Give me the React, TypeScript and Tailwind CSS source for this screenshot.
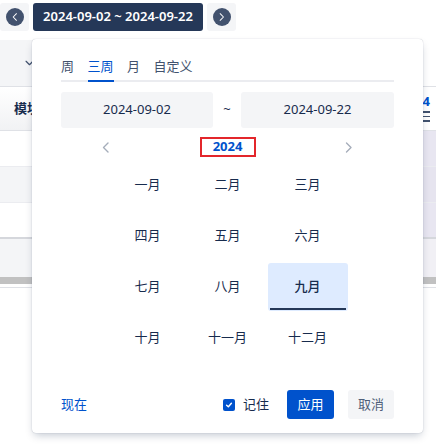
import { useState } from "react";

const months = [
  "一月", "二月", "三月",
  "四月", "五月", "六月",
  "七月", "八月", "九月",
  "十月", "十一月", "十二月",
];

const tabs = ["周", "三周", "月", "自定义"];

function Chevron({ dir, className }: { dir: "left" | "right" | "down"; className?: string }) {
  const points =
    dir === "left" ? "6,1 1.5,5.5 6,10" : dir === "right" ? "1.5,1 6,5.5 1.5,10" : "1,1.5 5,5.5 9,1.5";
  return (
    <svg
      viewBox={dir === "down" ? "0 0 10 7" : "0 0 8 11"}
      className={className}
      fill="none"
      stroke="currentColor"
      strokeWidth={1.4}
      strokeLinecap="round"
      strokeLinejoin="round"
    >
      <polyline points={points} />
    </svg>
  );
}

function RoundArrow({ dir }: { dir: "left" | "right" }) {
  return (
    <button className="flex h-[28px] w-[29px] items-center justify-center rounded-[3px] bg-[#f4f5f7]">
      <span className="flex h-[18px] w-[18px] items-center justify-center rounded-full bg-[#42526e] text-white">
        <Chevron dir={dir} className="h-[8px] w-[6px]" />
      </span>
    </button>
  );
}

export default function App() {
  const [tab, setTab] = useState("三周");
  const [month, setMonth] = useState("九月");
  const [remember, setRemember] = useState(true);

  return (
    <div className="relative h-[445px] w-[436px] overflow-hidden bg-white font-['Noto_Sans','Noto_Sans_CJK_SC',sans-serif] text-[13px] text-[#172b4d]">
      {/* toolbar */}
      <div className="flex items-center gap-[4px] pt-[3px]">
        <RoundArrow dir="left" />
        <div className="flex h-[28px] w-[170px] items-center justify-center rounded-[3px] bg-[#253858] text-[13px] font-semibold text-white">
          2024-09-02 ~ 2024-09-22
        </div>
        <RoundArrow dir="right" />
      </div>

      {/* page behind the popover */}
      <div className="mt-[9px] flex h-[46px] w-[300px] items-center bg-[#f4f5f7] pl-[25px]">
        <Chevron dir="down" className="h-[6px] w-[9px] text-[#42526e]" />
      </div>
      <div className="flex h-[45px] border-y border-[#dfe1e6]">
        <div className="flex flex-1 items-center bg-gradient-to-b from-white to-[#f1f2f4] pl-[14px] font-bold">
          模块
        </div>
        <div className="flex w-[36px] flex-col items-end justify-center gap-[3px] pr-[6px]">
          <span className="text-[13px] font-bold leading-[13px] text-[#0052cc]">24</span>
          <span className="flex w-[8px] flex-col gap-[3px]">
            <span className="h-[1.5px] bg-[#42526e]" />
            <span className="h-[1.5px] bg-[#42526e]" />
            <span className="h-[1.5px] bg-[#42526e]" />
          </span>
        </div>
      </div>
      <div className="flex h-[36px] border-b border-[#ebecf0]">
        <div className="flex-1 bg-white" />
        <div className="w-[36px] bg-[#e8e6f1]" />
      </div>
      <div className="flex h-[36px] border-b border-[#ebecf0]">
        <div className="flex-1 bg-[#f4f5f7]" />
        <div className="w-[36px] bg-[#e6e4ef]" />
      </div>
      <div className="flex h-[36px] border-b-2 border-[#d5d7dc]">
        <div className="flex-1 bg-white" />
        <div className="w-[36px] bg-[#e8e6f1]" />
      </div>
      <div className="flex h-[38px]">
        <div className="flex-1 bg-[#f4f5f7]" />
        <div className="w-[36px] bg-[#f1f0f5]" />
      </div>
      <div className="h-[7px] bg-[#c1c1c1]" />
      <div className="mt-[3px] h-px bg-[#dfe1e6]" />

      {/* popover */}
      <div className="absolute left-[32px] top-[39px] flex h-[394px] w-[391px] flex-col rounded-[4px] bg-white px-[29px] pb-[14px] pt-[17px] shadow-[0_4px_8px_-2px_rgba(9,30,66,0.25),0_0_1px_rgba(9,30,66,0.31)]">
        <div className="flex gap-[13.5px] border-b-2 border-[#ebecf0]">
          {tabs.map((t) => (
            <button
              key={t}
              onClick={() => setTab(t)}
              className={
                "-mb-[2px] border-b-2 pb-[4px] text-[13px] leading-[20px] " +
                (t === tab ? "border-[#0052cc] text-[#0052cc]" : "border-transparent text-[#42526e]")
              }
            >
              {t}
            </button>
          ))}
        </div>

        <div className="mt-[10px] grid grid-cols-[152px_28px_1fr] items-center">
          <div className="flex h-[36px] items-center justify-center rounded-[3px] bg-[#f4f5f7]">2024-09-02</div>
          <div className="text-center">~</div>
          <div className="flex h-[36px] items-center justify-center rounded-[3px] bg-[#f4f5f7]">2024-09-22</div>
        </div>

        <div className="mt-[9px] flex h-[20px] items-center justify-between px-[41px] text-[#a5adba]">
          <Chevron dir="left" className="h-[11px] w-[8px]" />
          <div className="flex h-[20px] w-[56px] items-center justify-center border-2 border-[#e3262b] text-[13px] font-bold text-[#0052cc]">
            2024
          </div>
          <Chevron dir="right" className="h-[11px] w-[8px]" />
        </div>

        <div className="mx-auto mt-[4px] grid w-[240px] grid-cols-3 gap-y-[3px]">
          {months.map((m) => (
            <button
              key={m}
              onClick={() => setMonth(m)}
              className={
                "relative flex h-[48px] items-center justify-center rounded-[3px] " +
                (m === month ? "bg-[#deebff] font-medium" : "")
              }
            >
              {m}
              {m === month && (
                <span className="absolute bottom-[1px] left-[2px] right-[2px] h-[2px] bg-[#253858]" />
              )}
            </button>
          ))}
        </div>

        <div className="mt-auto flex items-center">
          <span className="text-[#0052cc]">现在</span>
          <label className="ml-auto flex items-center gap-[8px]">
            <span
              onClick={() => setRemember(!remember)}
              className="flex h-[12px] w-[12px] items-center justify-center rounded-[2px] bg-[#0052cc] text-white"
            >
              {remember && (
                <svg viewBox="0 0 10 10" className="h-[8px] w-[8px]" fill="none" stroke="currentColor" strokeWidth={1.8} strokeLinecap="round" strokeLinejoin="round">
                  <polyline points="2,5.2 4.2,7.2 8,2.8" />
                </svg>
              )}
            </span>
            记住
          </label>
          <button className="ml-[18px] flex h-[29px] w-[47px] items-center justify-center rounded-[3px] bg-[#0052cc] text-white">
            应用
          </button>
          <button className="ml-[14px] flex h-[29px] w-[46px] items-center justify-center rounded-[3px] bg-[#f4f5f7] text-[#505f79]">
            取消
          </button>
        </div>
      </div>
    </div>
  );
}
